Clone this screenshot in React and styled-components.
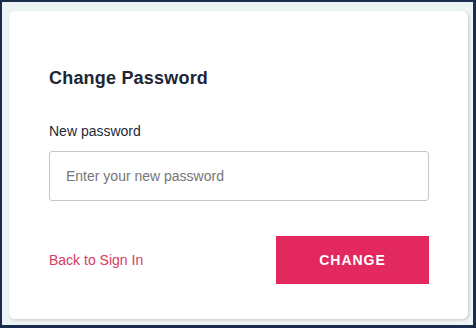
import React from "react";
import styled, { createGlobalStyle } from "styled-components";

const GlobalStyle = createGlobalStyle`
  html, body {
    margin: 0;
    padding: 0;
    background: #1b2d4f;
  }
  * {
    box-sizing: border-box;
  }
`;

const Frame = styled.div`
  width: 476px;
  height: 328px;
  border: 2px solid #1b2d4f;
  border-right-width: 3px;
  border-bottom-width: 3px;
  background: #eef3f6;
  padding: 9px 0 0 7px;
  font-family: "Liberation Sans", Arial, sans-serif;
`;

const Card = styled.div`
  width: 459px;
  height: 308px;
  background: #fff;
  border-radius: 6px;
  box-shadow: 1px 1px 3px rgba(0, 0, 0, 0.18);
  padding: 57px 39px 0 40px;
  display: flex;
  flex-direction: column;
`;

const Title = styled.h2`
  margin: 0;
  font-size: 18px;
  line-height: 21px;
  font-weight: 700;
  letter-spacing: 0.2px;
  color: #1c2636;
`;

const Label = styled.label`
  margin-top: 34px;
  font-size: 14px;
  line-height: 16px;
  color: #222a35;
`;

const Input = styled.input`
  margin-top: 12px;
  width: 380px;
  height: 50px;
  border: 1px solid #c6c6c6;
  border-radius: 3px;
  padding: 0 16px;
  font-family: inherit;
  font-size: 14px;
  color: #333;
  outline: none;

  &::placeholder {
    color: #767676;
  }
`;

const Footer = styled.div`
  margin-top: 35px;
  width: 380px;
  display: flex;
  align-items: center;
  justify-content: space-between;
`;

const BackLink = styled.a`
  font-size: 14px;
  color: #d83a62;
  text-decoration: none;
  cursor: pointer;
`;

const ChangeButton = styled.button`
  width: 153px;
  height: 48px;
  border: none;
  background: #e2285f;
  color: #fff;
  font-family: inherit;
  font-size: 14px;
  font-weight: 700;
  letter-spacing: 1px;
  cursor: pointer;
`;

export default function App() {
  return (
    <>
      <GlobalStyle />
      <Frame>
        <Card>
          <Title>Change Password</Title>
          <Label htmlFor="new-password">New password</Label>
          <Input
            id="new-password"
            type="password"
            placeholder="Enter your new password"
          />
          <Footer>
            <BackLink>Back to Sign In</BackLink>
            <ChangeButton>CHANGE</ChangeButton>
          </Footer>
        </Card>
      </Frame>
    </>
  );
}
